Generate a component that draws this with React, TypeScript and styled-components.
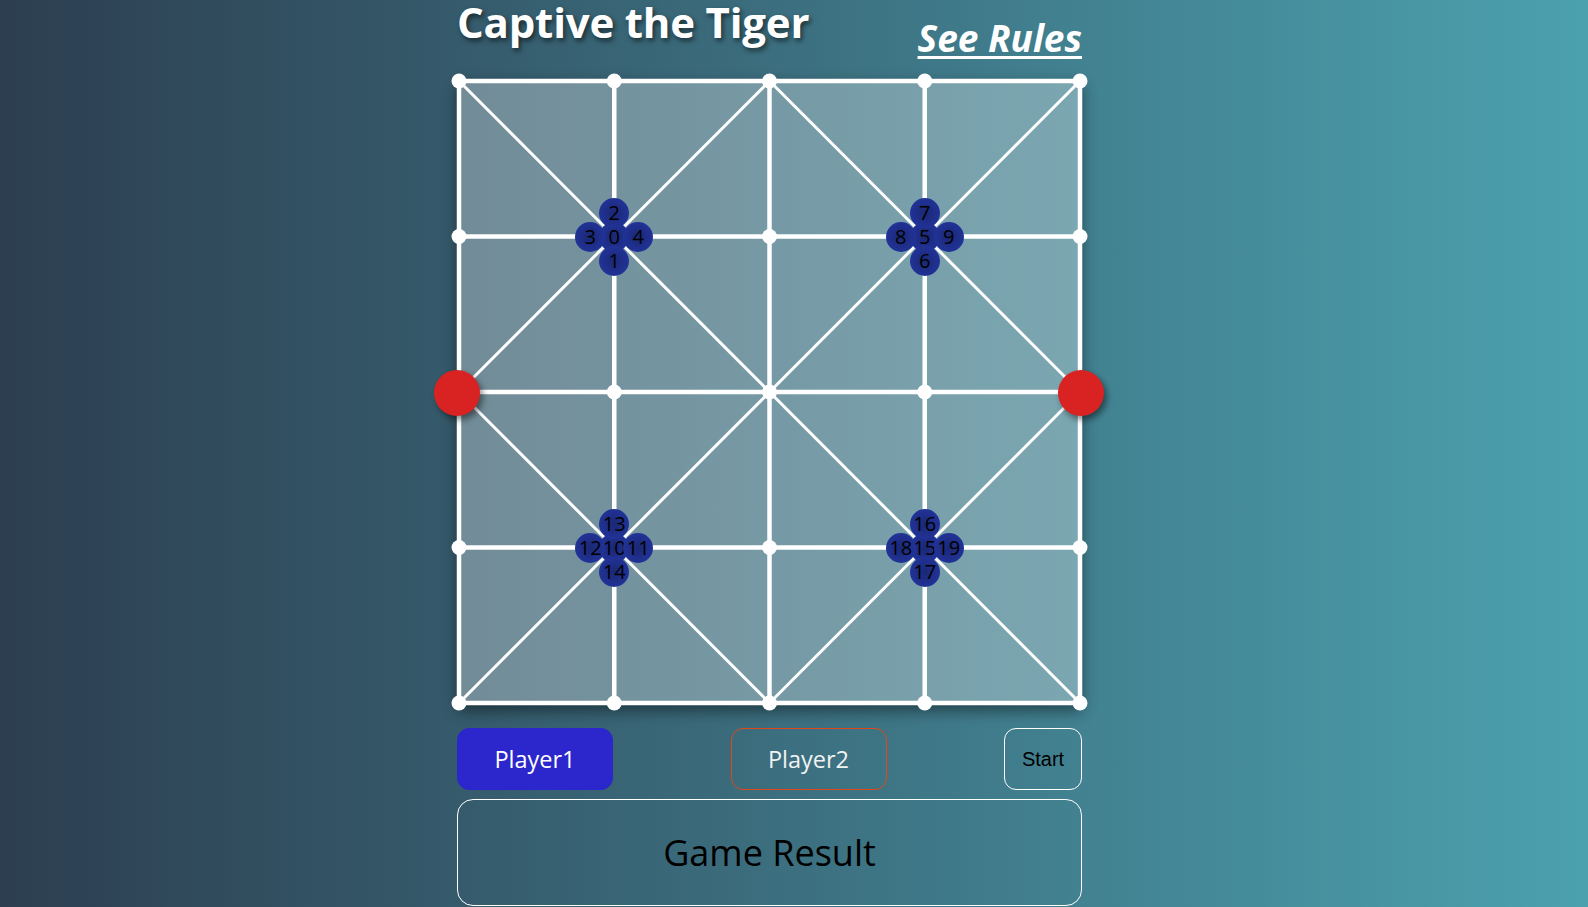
import React from "react";
import styled, { createGlobalStyle } from "styled-components";

const GlobalStyle = createGlobalStyle`
  html, body {
    margin: 0;
    padding: 0;
  }
  body {
    min-height: 100vh;
    background: linear-gradient(to right, #2c3e50, #4ca1af);
    font-family: "Open Sans", "DejaVu Sans", sans-serif;
    overflow: hidden;
  }
`;

const Page = styled.div`
  height: 907px;
  display: flex;
  justify-content: flex-start;
  padding-left: 457px;
  box-sizing: border-box;
`;

const Column = styled.main`
  width: 625px;
  display: flex;
  flex-direction: column;
`;

const Header = styled.header`
  height: 79px;
  display: flex;
  justify-content: space-between;
  align-items: flex-start;
`;

const Title = styled.h1`
  margin: 0;
  font-size: 42px;
  line-height: 46px;
  margin-top: -1px;
  font-weight: 700;
  color: #ffffff;
  text-shadow: 2px 3px 5px rgba(0, 0, 0, 0.55);
  letter-spacing: -0.2px;
`;

const RulesLink = styled.a`
  margin-top: 17px;
  font-size: 37px;
  line-height: 42px;
  font-weight: 700;
  font-style: italic;
  color: #ffffff;
  text-decoration: underline;
  text-decoration-thickness: 3px;
  text-underline-offset: 4px;
  cursor: pointer;
`;

const Board = styled.div`
  position: relative;
  width: 625px;
  height: 626px;
  flex: none;
  background: rgba(255, 255, 255, 0.3);
  box-shadow: 0 6px 14px rgba(0, 0, 0, 0.45);
`;

const BoardSvg = styled.svg`
  position: absolute;
  left: 0;
  top: 0;
  width: 625px;
  height: 626px;
  overflow: visible;
`;

const Goat = styled.div`
  position: absolute;
  width: 30px;
  height: 30px;
  margin: -15px 0 0 -15px;
  border-radius: 50%;
  background: radial-gradient(circle at center, #1a2873 0%, #22339a 75%, #2a3aa6 100%);
  color: #000000;
  font-size: 20px;
  line-height: 30px;
  text-align: center;
  white-space: nowrap;
  display: flex;
  justify-content: center;
  align-items: center;
`;

const Tiger = styled.div`
  position: absolute;
  width: 46px;
  height: 46px;
  margin: -23px 0 0 -23px;
  border-radius: 50%;
  background: #d92323;
  box-shadow: 3px 4px 6px rgba(0, 0, 0, 0.45);
`;

const Controls = styled.div`
  margin-top: 23px;
  height: 62px;
  display: flex;
  justify-content: space-between;
  align-items: stretch;
`;

const PlayerButton = styled.button<{ $active?: boolean }>`
  width: 156px;
  border-radius: 12px;
  border: 1px solid ${(p) => (p.$active ? "#2b27cc" : "#e0481a")};
  background: ${(p) => (p.$active ? "#2b27cc" : "transparent")};
  color: ${(p) => (p.$active ? "#ffffff" : "#f2f2f2")};
  font-family: "Open Sans", "DejaVu Sans", sans-serif;
  font-size: 23.5px;
  padding: 0;
  cursor: pointer;
`;

const StartButton = styled.button`
  width: 78px;
  border-radius: 12px;
  border: 1px solid #ffffff;
  background: transparent;
  color: #000000;
  font-family: "Liberation Sans", Arial, sans-serif;
  font-size: 20px;
  padding: 0;
  cursor: pointer;
`;

const ResultBox = styled.section`
  margin-top: 9px;
  height: 107px;
  box-sizing: border-box;
  border: 1px solid #ffffff;
  border-radius: 16px;
  display: flex;
  align-items: center;
  justify-content: center;
  font-size: 36px;
  color: #000000;
`;

const P = [2, 157.25, 312.5, 467.75, 623];
const PY = [2, 157.5, 313, 468.5, 624];

type Pt = [number, number];

const buildLines = () => {
  const diag: [Pt, Pt][] = [];
  for (let r = 0; r < 4; r++) {
    for (let c = 0; c < 4; c++) {
      if ((r + c) % 2 === 0) {
        diag.push([[P[c], PY[r]], [P[c + 1], PY[r + 1]]]);
      } else {
        diag.push([[P[c], PY[r + 1]], [P[c + 1], PY[r]]]);
      }
    }
  }
  return diag;
};

const DIAGONALS = buildLines();

const GROUPS: { center: Pt; ids: number[] }[] = [
  { center: [P[1], PY[1]], ids: [0, 1, 2, 3, 4] },
  { center: [P[3], PY[1]], ids: [5, 6, 7, 8, 9] },
  { center: [P[1], PY[3]], ids: [10, 14, 13, 12, 11] },
  { center: [P[3], PY[3]], ids: [15, 17, 16, 18, 19] },
];

// offsets for: center, below, above, left, right
const OFFSETS: Pt[] = [
  [0, 0],
  [0, 24],
  [0, -24],
  [-24, 0],
  [24, 0],
];

const App: React.FC = () => {
  const goats: { id: number; x: number; y: number }[] = [];
  GROUPS.forEach((g) => {
    g.ids.forEach((id, i) => {
      goats.push({ id, x: g.center[0] + OFFSETS[i][0], y: g.center[1] + OFFSETS[i][1] });
    });
  });
  goats.sort((a, b) => a.id - b.id);

  return (
    <>
      <GlobalStyle />
      <Page>
        <Column>
          <Header>
            <Title>Captive the Tiger</Title>
            <RulesLink>See Rules</RulesLink>
          </Header>
          <Board>
            <BoardSvg viewBox="0 0 625 626">
              {DIAGONALS.map(([a, b], i) => (
                <line key={`d${i}`} x1={a[0]} y1={a[1]} x2={b[0]} y2={b[1]} stroke="#ffffff" strokeWidth={3} />
              ))}
              {PY.map((v, i) => (
                <line key={`h${i}`} x1={P[0]} y1={v} x2={P[4]} y2={v} stroke="#ffffff" strokeWidth={4.5} />
              ))}
              {P.map((v, i) => (
                <line key={`v${i}`} x1={v} y1={PY[0]} x2={v} y2={PY[4]} stroke="#ffffff" strokeWidth={4.5} />
              ))}
              {PY.map((y) =>
                P.map((x) => <circle key={`c${x}-${y}`} cx={x} cy={y} r={7.5} fill="#ffffff" />)
              )}
            </BoardSvg>
            {goats.map((g) => (
              <Goat key={g.id} style={{ left: g.x, top: g.y }}>
                {g.id}
              </Goat>
            ))}
            <Tiger style={{ left: P[0] - 2, top: PY[2] + 1 }} />
            <Tiger style={{ left: P[4] + 1, top: PY[2] + 1 }} />
          </Board>
          <Controls>
            <PlayerButton $active>Player1</PlayerButton>
            <PlayerButton>Player2</PlayerButton>
            <StartButton>Start</StartButton>
          </Controls>
          <ResultBox>Game Result</ResultBox>
        </Column>
      </Page>
    </>
  );
};

export default App;
